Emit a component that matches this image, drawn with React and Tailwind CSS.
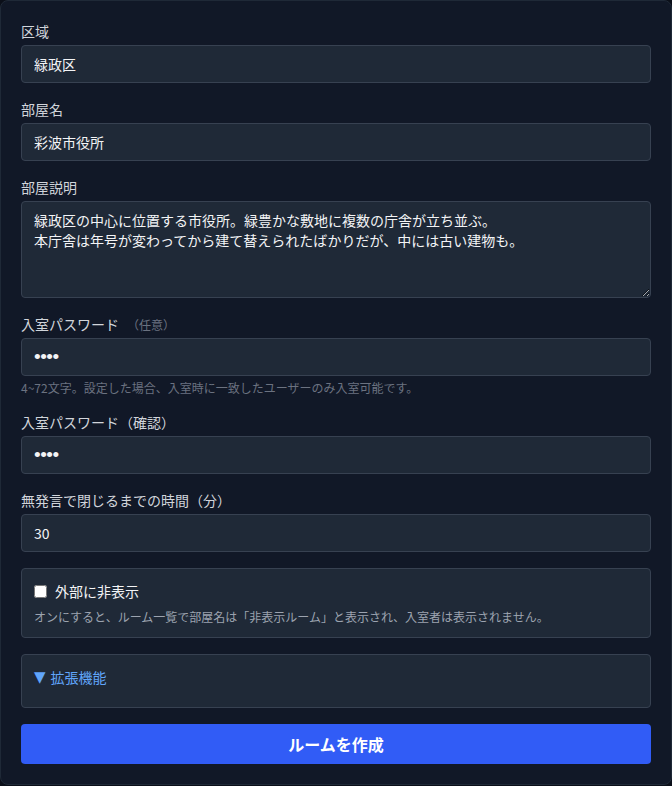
import { useState } from 'react';

const font = { fontFamily: '"Noto Sans CJK JP", "Noto Sans", sans-serif' };

function Field({ label, extra, hint, children }) {
  return (
    <div>
      <label className="block mb-1 text-sm leading-5 text-[#d1d5db]">
        {label}
        {extra && <span className="ml-2 text-xs text-[#6b7280]">{extra}</span>}
      </label>
      {children}
      {hint && <p className="mt-1 text-xs leading-4 text-[#6b7280]">{hint}</p>}
    </div>
  );
}

const inputCls =
  'block w-full rounded bg-[#1f2937] border border-[#374151] px-3 py-2 text-sm leading-5 text-[#f3f4f6] outline-none';

const pwCls = `${inputCls} font-['Liberation_Sans'] !text-[19px] tracking-[-0.5px]`;

export default function App() {
  const [hidden, setHidden] = useState(false);

  return (
    <div className="min-h-[786px] bg-[#0b0f19]" style={font}>
      <form
        className="bg-[#111827] border border-[#1f2937] rounded-lg p-5 space-y-4"
        onSubmit={(e) => e.preventDefault()}
      >
        <Field label="区域">
          <input className={inputCls} defaultValue="緑政区" />
        </Field>

        <Field label="部屋名">
          <input className={inputCls} defaultValue="彩波市役所" />
        </Field>

        <Field label="部屋説明">
          <textarea
            rows={4}
            className={`${inputCls} h-[97px]`}
            defaultValue={'緑政区の中心に位置する市役所。緑豊かな敷地に複数の庁舎が立ち並ぶ。\n本庁舎は年号が変わってから建て替えられたばかりだが、中には古い建物も。'}
          />
        </Field>

        <Field
          label="入室パスワード"
          extra="（任意）"
          hint="4~72文字。設定した場合、入室時に一致したユーザーのみ入室可能です。"
        >
          <input type="password" className={pwCls} defaultValue="abcd" />
        </Field>

        <Field label="入室パスワード（確認）">
          <input type="password" className={pwCls} defaultValue="abcd" />
        </Field>

        <Field label="無発言で閉じるまでの時間（分）">
          <input className={inputCls} defaultValue="30" />
        </Field>

        <div className="rounded bg-[#1f2937] border border-[#374151] p-3">
          <label className="flex items-center gap-2 text-sm leading-5 text-[#f3f4f6]">
            <input
              type="checkbox"
              className="w-[13px] h-[13px]"
              checked={hidden}
              onChange={(e) => setHidden(e.target.checked)}
            />
            外部に非表示
          </label>
          <p className="mt-2 text-xs leading-4 text-[#9ca3af]">
            オンにすると、ルーム一覧で部屋名は「非表示ルーム」と表示され、入室者は表示されません。
          </p>
        </div>

        <div className="rounded bg-[#1f2937] border border-[#374151] px-3 pt-3 pb-5">
          <div className="flex items-center text-sm leading-5 text-[#60a5fa]">
            <span className="mr-[5px] text-[15px] leading-5 font-['DejaVu_Sans']">▼</span>
            拡張機能
          </div>
        </div>

        <button
          type="submit"
          className="block w-full rounded bg-[#315cf6] py-2 text-base leading-6 font-bold text-white"
        >
          ルームを作成
        </button>
      </form>
    </div>
  );
}
